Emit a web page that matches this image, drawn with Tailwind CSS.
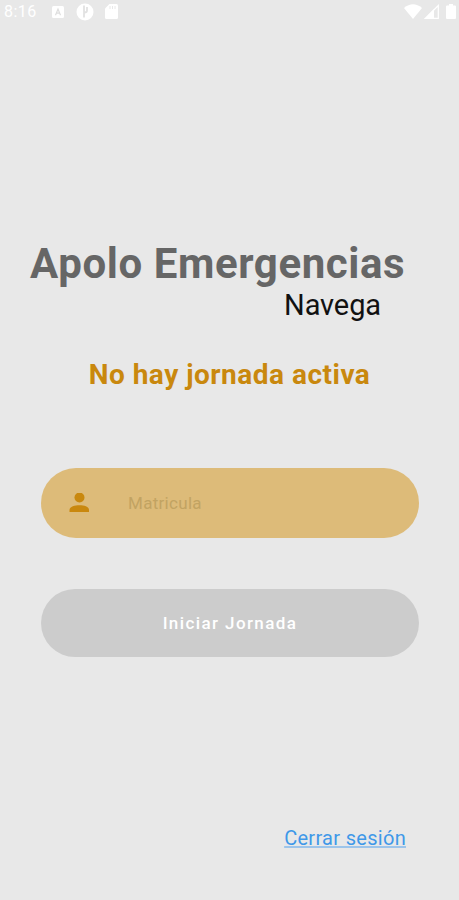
<!DOCTYPE html>
<html lang="es">
<head>
  <meta charset="UTF-8" />
  <meta name="viewport" content="width=device-width, initial-scale=1.0"/>
  <title>Apolo Emergencias</title>
  <script src="https://cdn.jsdelivr.net/npm/@tailwindcss/browser@4"></script>
</head>
<body class="h-screen overflow-hidden bg-[#e8e8e8] font-['Roboto',sans-serif] flex flex-col">

  <!-- Barra de estado -->
  <header class="h-[23px] shrink-0 flex items-center pl-[4px] text-white">
    <span class="w-[48px] text-[16px] leading-6 tracking-[0.5px]">8:16</span>
    <svg class="w-3 h-3" viewBox="0 0 12 12">
      <rect width="12" height="12" rx="1.5" fill="#fff"/>
      <path d="M3.500 9.200 6 3l2.500 6.200M4.500 7.200h3" fill="none" stroke="#dedede" stroke-width="1.200"/>
    </svg>
    <svg class="w-[18px] h-[18px] ml-3" viewBox="0 0 18 18">
      <circle cx="9" cy="9" r="8.500" fill="#fff"/>
      <path d="M8 2.500v12M11 4v3.500q0 2-2.500 2" fill="none" stroke="#e2e2e2" stroke-width="1.800"/>
    </svg>
    <svg class="w-[13px] h-[15px] ml-[11px]" viewBox="0 0 13 15">
      <path d="M4.500 0H11.500Q13 0 13 1.500v12Q13 15 11.500 15h-10Q0 15 0 13.500V4.500z" fill="#fff"/>
      <path d="M5 2v3M7.500 2v3M10 2v3" stroke="#e8e8e8" stroke-width="1"/>
    </svg>
    <svg class="w-[18px] h-[15px] ml-auto" viewBox="0 0 18 15">
      <path d="M0 4Q9-3.500 18 4L9 15z" fill="#fff"/>
    </svg>
    <svg class="w-[15px] h-[15px] ml-[2px]" viewBox="0 0 15 15">
      <path d="M14.300 1.500v12.800H1.500z" fill="none" stroke="#fff" stroke-width="1.200"/>
      <path d="M10 5v10H0z" fill="#fff"/>
    </svg>
    <svg class="w-[10px] h-[15px] ml-[7px] mr-[3px]" viewBox="0 0 10 15">
      <path d="M3 0h4v1.500h2q1 0 1 1V14q0 1-1 1H1q-1 0-1-1V2.500q0-1 1-1h2z" fill="#fff"/>
    </svg>
  </header>

  <!-- Contenido -->
  <main class="grow flex flex-col pt-[217px] px-[41px]">
    <h1 class="-ml-[11px] whitespace-nowrap text-[42px] leading-[48px] font-bold tracking-[0.6px] text-[#666666]">Apolo Emergencias</h1>
    <p class="self-end mr-[37px] -mt-px text-[29px] leading-9 tracking-[-0.1px] text-[#111111]">Navega</p>
    <h2 class="mt-[34px] text-center whitespace-nowrap text-[28px] leading-9 font-bold tracking-[0.5px] text-[#c9880e]">No hay jornada activa</h2>

    <label class="mt-[75px] h-[70px] w-[378px] shrink-0 rounded-full bg-[#ddbb79] flex items-center pl-[28px]">
      <svg class="w-5 h-5 shrink-0" viewBox="0 0 20 20" fill="#c9880e">
        <circle cx="10.500" cy="4.500" r="5"/>
        <path d="M0.500 19v-2C0.500 13.500 6 12.300 10.500 12.300s9.500 1.200 9.500 4.700v2z"/>
      </svg>
      <input type="text" placeholder="Matricula" class="ml-[39px] w-[200px] text-[17px] leading-6 tracking-[0.3px] outline-none placeholder:text-[#c2a362]" />
    </label>

    <button class="mt-[51px] h-[68px] w-[378px] shrink-0 rounded-full bg-[#cccccc] text-[17px] leading-6 font-medium tracking-[1.400px] text-white">Iniciar Jornada</button>

    <a href="#" class="self-end mt-[169px] mr-[12px] text-[20px] leading-6 tracking-[0.3px] text-[#3f98e8] underline decoration-[#9cc4ea] decoration-2 underline-offset-1">Cerrar sesión</a>
  </main>

</body>
</html>
